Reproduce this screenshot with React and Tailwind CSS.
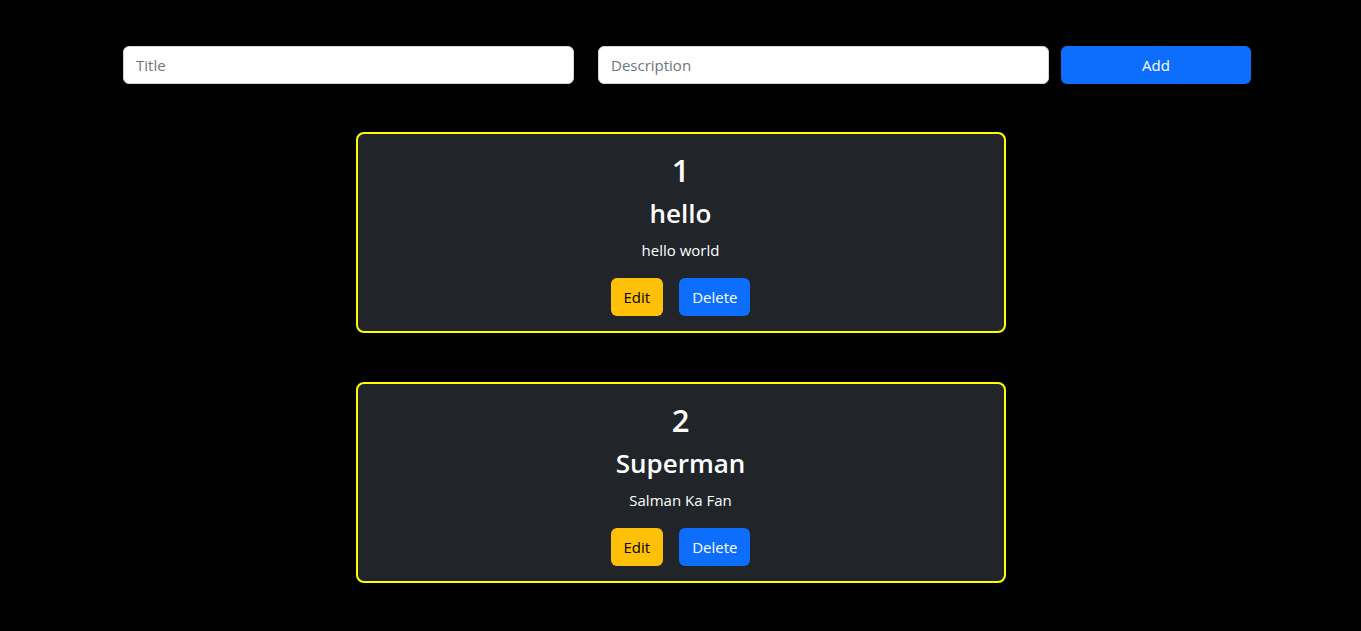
import React from 'react';

const todos = [
  { id: 1, title: 'hello', desc: 'hello world' },
  { id: 2, title: 'Superman', desc: 'Salman Ka Fan' },
];

const TodoCard = ({ todo }) => {
  return (
    <div className="w-[650px] mx-auto bg-[#212529] border-2 border-[#ffff00] rounded-[8px] pt-[17px] pb-[15px] flex flex-col items-center text-white">
      <h2 className="text-[31px] leading-[38px] font-semibold mb-[7px]">{todo.id}</h2>
      <h3 className="text-[26px] leading-[34px] font-semibold mb-[8px]">{todo.title}</h3>
      <p className="text-[15px] leading-[24px] mb-[16px]">{todo.desc}</p>
      <div className="flex gap-4">
        <button className="h-[38px] px-[13px] rounded-[6px] bg-[#ffc107] text-black text-[15px]">Edit</button>
        <button className="h-[38px] px-[13px] rounded-[6px] bg-[#0d6efd] text-white text-[15px]">Delete</button>
      </div>
    </div>
  );
};

export default function App() {
  return (
    <div className="min-h-[631px] bg-black font-['Open_Sans',sans-serif] pt-[46px] pb-[48px]">
      {/* Add form */}
      <div className="flex ml-[123px] w-[1128px]">
        <input
          type="text"
          placeholder="Title"
          className="w-[451px] h-[38px] bg-white border border-[#ced4da] rounded-[6px] px-3 text-[15px] text-[#212529] placeholder:text-[#6c757d] outline-none"
        />
        <input
          type="text"
          placeholder="Description"
          className="w-[451px] h-[38px] ml-6 bg-white border border-[#ced4da] rounded-[6px] px-3 text-[15px] text-[#212529] placeholder:text-[#6c757d] outline-none"
        />
        <button className="w-[190px] h-[38px] ml-3 bg-[#0d6efd] text-white rounded-[6px] text-[15px]">Add</button>
      </div>

      {/* Todo list */}
      <div className="mt-[48px] flex flex-col gap-[49px]">
        {todos.map((t) => (
          <TodoCard key={t.id} todo={t} />
        ))}
      </div>
    </div>
  );
}
